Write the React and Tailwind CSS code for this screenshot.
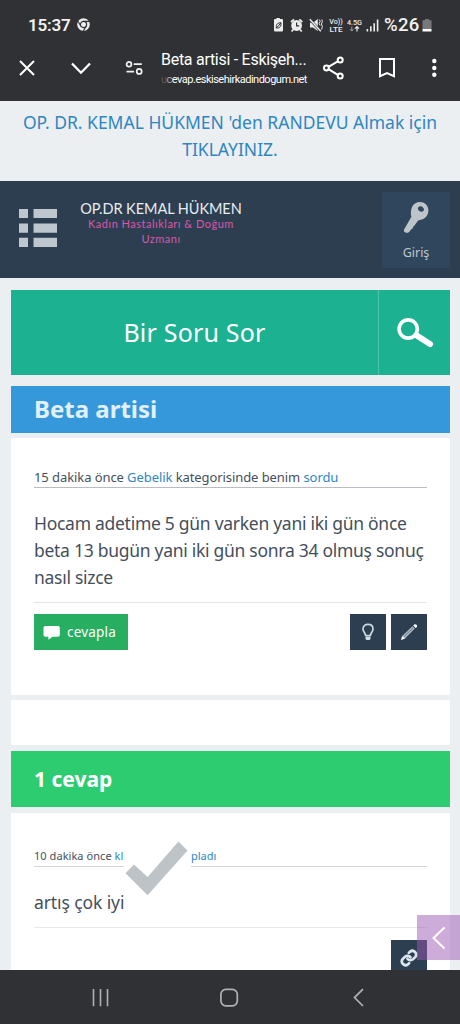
import React from "react";

function StatusBar() {
  return (
    <div className="flex h-[48px] items-center pl-[28px] pt-px text-[#f1f1f1]">
      <span className="w-[43px] whitespace-nowrap font-['Roboto',sans-serif] text-[17px] font-semibold leading-[20px] tracking-[-0.2px]">15:37</span>
      <svg className="ml-[6px]" width="13" height="13" viewBox="0 0 13 13">
        <circle cx="6.5" cy="6.5" r="6.3" fill="#ededed" />
        <circle cx="6.5" cy="6.5" r="3.1" fill="none" stroke="#303134" strokeWidth="1.2" />
        <path d="M6.5 3.4H12M3.8 8L1 3.3M9.2 8L6.4 12.8" stroke="#303134" strokeWidth="1.1" />
      </svg>
      <svg className="ml-[183px]" width="108" height="18" viewBox="273 15.5 108 18">
        <path d="M276.4 18.5V17.6H279.8V18.5H282Q283 18.5 283 19.5V30Q283 31 282 31H275Q274 31 274 30V19.5Q274 18.5 275 18.5Z" fill="#ededed" />
        <path d="M276.3 27.7L280.7 22.7M276.4 27.5C275.7 23.3 278 22.4 281 22.2C281.3 26 279.6 28 276.4 27.5Z" fill="none" stroke="#303134" strokeWidth="1" />
        <circle cx="296.6" cy="25" r="5.4" fill="#ededed" />
        <path d="M291 21.5L294 18.9M299.3 18.9L302.3 21.5M293.2 29L291.6 31M300 29L301.7 31" stroke="#ededed" strokeWidth="1.8" />
        <path d="M296.6 22V25.3H299.2" fill="none" stroke="#303134" strokeWidth="1.2" />
        <path d="M310 22.3H313L317.8 18.5V30.5L313 27H310Z" fill="#ededed" />
        <path d="M309.8 18.8L320.8 30.8" stroke="#303134" strokeWidth="2.6" />
        <path d="M309.8 18.8L320.8 30.8" stroke="#ededed" strokeWidth="1.4" />
        <path d="M319.2 19L320.3 20.8L319 22.8L320.2 25M321.8 19L322.4 21L321.4 23.5L322.4 26L321.6 29" fill="none" stroke="#ededed" strokeWidth="1" />
        <g fill="#ededed" fontFamily="Roboto, sans-serif" fontWeight="500">
          <text x="329.3" y="23.3" fontSize="7" textLength="13.5" lengthAdjust="spacingAndGlyphs">Vo))</text>
          <text x="329.5" y="31.7" fontSize="7.4" textLength="13" lengthAdjust="spacingAndGlyphs">LTE</text>
          <text x="347" y="24" fontSize="8" textLength="15" lengthAdjust="spacingAndGlyphs">4.5G</text>
        </g>
        <path d="M351.8 26V30.5M350 28.7L351.8 30.6L353.6 28.7" fill="none" stroke="#999" strokeWidth="1" />
        <path d="M357 31V26.4M355 28.2L357 26.2L359 28.2" fill="none" stroke="#ededed" strokeWidth="1.2" />
        <path d="M367.4 31V28.4M370.8 31V25.7M374.2 31V22.7M377.6 31V19" stroke="#ededed" strokeWidth="1.6" />
      </svg>
      <span className="ml-[3px] w-[38px] whitespace-nowrap font-['Roboto',sans-serif] text-[18.5px] font-medium leading-[20px] tracking-[0.3px]">%26</span>
      <svg className="mt-px" width="10" height="13" viewBox="0 0 10 13">
        <path d="M3 0H7V1.3H9.5V10H.5V1.3H3Z" fill="#77787a" />
        <path d="M.5 10H9.5V12.5H.5Z" fill="#fff" />
      </svg>
    </div>
  );
}

function BrowserBar() {
  return (
    <div className="flex h-[53px] pl-[19px] text-white">
      <svg className="mt-[12px] shrink-0" width="16" height="16" viewBox="0 0 16 16">
        <path d="M1 1L15 15M15 1L1 15" stroke="#fff" strokeWidth="2" />
      </svg>
      <svg className="ml-[35px] mt-[14px] shrink-0" width="22" height="13" viewBox="0 0 22 13">
        <path d="M2 1.5L11 10.7L20 1.5" fill="none" stroke="#fff" strokeWidth="2.3" />
      </svg>
      <svg className="ml-[33px] mt-[12px] shrink-0" width="18" height="16" viewBox="0 0 18 16">
        <g fill="none" stroke="#f0f0f0" strokeWidth="1.7">
          <circle cx="4" cy="4.2" r="2.4" />
          <circle cx="14.2" cy="11.4" r="2.5" />
          <path d="M8.7 4.2H16.8M1.5 11.6H9" />
        </g>
      </svg>
      <div className="ml-[18px] w-[148px] shrink-0 whitespace-nowrap font-['Roboto',sans-serif]">
        <div className="h-[24px] text-[16px] leading-[24px] tracking-[-0.28px]">Beta artisi - Eskişeh...</div>
        <div className="h-[14px] text-[11px] leading-[15px] tracking-[-0.5px]">
          <span className="text-[#5a5b5e]">u</span><span className="text-[#a5a5a7]">c</span>evap.eskisehirkadindogum.net
        </div>
      </div>
      <svg className="ml-[14px] mt-[8px] shrink-0" width="22" height="24" viewBox="0 0 22 24">
        <g fill="none" stroke="#fff" strokeWidth="2">
          <path d="M5.5 10.8L14.8 5.3M5.5 13.2L14.8 18.9" />
          <circle cx="3.4" cy="12" r="2.4" />
          <circle cx="17.2" cy="4.1" r="2.5" />
          <circle cx="17.2" cy="20" r="2.5" />
        </g>
      </svg>
      <svg className="ml-[33px] mt-[9px] shrink-0" width="18" height="22" viewBox="0 0 18 22">
        <path d="M2 2H16V19.2L9 16L2 19.2Z" fill="none" stroke="#fff" strokeWidth="2" />
      </svg>
      <svg className="ml-[34px] mt-[10px] shrink-0" width="8" height="20" viewBox="0 0 8 20">
        <circle cx="4.3" cy="3" r="2.2" fill="#fff" />
        <circle cx="4.3" cy="10" r="2.2" fill="#fff" />
        <circle cx="4.3" cy="16.8" r="2.2" fill="#fff" />
      </svg>
    </div>
  );
}

function SiteHeader() {
  return (
    <header className="flex h-[97px] bg-[#2d3e50] pl-[18px]">
      <svg className="mt-[27px] shrink-0" width="40" height="40" viewBox="0 0 40 40">
        <path d="M1 1H10V10H1ZM15.5 1H39V10H15.5ZM1 15.4H10V24.8H1ZM15.5 15.4H39V24.8H15.5ZM1 29.8H10V39H1ZM15.5 29.8H39V39H15.5Z" fill="#bdc7cd" />
      </svg>
      <div className="ml-[21px] mt-[19px] w-[164px] shrink-0 whitespace-nowrap text-center font-['Lato',sans-serif]">
        <div className="text-[14.5px] leading-[18px] tracking-[-0.05px] text-[#e6edf1]">OP.DR KEMAL HÜKMEN</div>
        <div className="mt-[-1px] text-[11px] leading-[14.5px] tracking-[0.5px] text-[#d858ac]">
          Kadın Hastalıkları &amp; Doğum
          <br />
          Uzmanı
        </div>
      </div>
      <div className="ml-auto mr-[10px] mt-[11px] flex h-[76px] w-[68px] flex-col items-center bg-[#30465c]">
        <svg className="mt-[9px]" width="28" height="33" viewBox="0 0 28 33">
          <path d="M17.7 1C22.5 1 26.4 4.5 26.4 9.2C26.4 14.5 22.8 18.4 18 18.9L16.2 19.6L12.3 24.8L11.3 25.6L10.9 27.3L9 28.4L7 31.2Q2 33 1.8 29L9.4 15.8L8.9 13.8C8.4 6 12 1 17.7 1ZM17.4 5.4C15.4 5.9 15.5 8.2 17 9.7C18.8 11.3 21.4 11 21.9 9.1C22.4 6.6 19.4 4.6 17.4 5.4Z" fill="#bdc5c9" fillRule="evenodd" />
        </svg>
        <span className="mt-[10px] text-[12.5px] leading-[18px] text-[#bcc8d0]">Giriş</span>
      </div>
    </header>
  );
}

function AskBar() {
  return (
    <div className="flex h-[85px] bg-[#1bb191] text-white">
      <div className="flex w-[367px] items-center justify-center text-[25px] tracking-[0.2px]">Bir Soru Sor</div>
      <div className="flex w-[72px] items-center justify-center border-l border-[#4fc5ad]">
        <svg width="38" height="32" viewBox="0 0 38 32">
          <circle cx="12.2" cy="12" r="9.1" fill="none" stroke="#fff" strokeWidth="3.6" />
          <path d="M20.3 18.2L34 27.1" stroke="#fff" strokeWidth="6" strokeLinecap="round" />
        </svg>
      </div>
    </div>
  );
}

function QuestionCard() {
  return (
    <article className="mt-[5px] h-[257px] rounded-[2px] bg-white px-[23px] pt-[28px]">
      <div className="h-[22px] whitespace-nowrap border-b border-[#b9bdc2] text-[13px] leading-[22px] tracking-[-0.08px]">
        15 dakika önce <span className="text-[#2e86c5]">Gebelik</span> kategorisinde benim <span className="text-[#2e86c5]">sordu</span>
      </div>
      <p className="mt-[22px] whitespace-nowrap text-[17.5px] leading-[27px] tracking-[-0.28px]">
        Hocam adetime 5 gün varken yani iki gün önce
        <br />
        beta 13 bugün yani iki gün sonra 34 olmuş sonuç
        <br />
        nasıl sizce
      </p>
      <div className="mt-[11px] border-b border-[#e3e5e8]" />
      <div className="mt-[11px] flex h-[36px] gap-[5px]">
        <button className="mr-auto flex w-[94px] items-center bg-[#27ae60] pl-[9px] text-white">
          <svg width="17" height="15" viewBox="0 0 17 15">
            <path d="M2.3 1H15Q16.8 1 16.8 2.7V10Q16.8 11.8 15 11.8H9.5L5.4 14.7V11.8H2.3Q.5 11.8 .5 10V2.7Q.5 1 2.3 1Z" fill="#fff" />
          </svg>
          <span className="ml-[7px] text-[13.5px] leading-[18px] tracking-[0.2px]">cevapla</span>
        </button>
        <button className="flex w-[36px] items-center justify-center bg-[#2c3e50]">
          <svg width="14" height="18" viewBox="0 0 14 18">
            <path d="M4.6 12.5C4.6 9.8 2 9 2 5.9C2 3 4.1 1.3 7 1.3S12 3 12 5.9C12 9 9.4 9.8 9.4 12.5Z" fill="none" stroke="#c9d7e2" strokeWidth="1.7" />
            <path d="M4.5 13.5H9.5V16L8.5 17H5.5L4.5 16Z" fill="#d5dfe6" />
          </svg>
        </button>
        <button className="flex w-[36px] items-center justify-center bg-[#2c3e50]">
          <svg width="18" height="18" viewBox="0 0 18 18">
            <path d="M1.3 16.7L2.7 12.6L12.4 3.3L14.8 5.6L5.3 15.2Z" fill="#a8b6c1" />
            <path d="M4 13.8L12.8 5" stroke="#52677a" strokeWidth=".7" />
            <path d="M13.2 2.5L14.6 1.2Q17.6 1 17 4L15.6 5Z" fill="#fff" />
            <path d="M1 17L2.2 13L5 15.6Z" fill="#fff" />
          </svg>
        </button>
      </div>
    </article>
  );
}

function AnswerCard() {
  return (
    <article className="relative mt-[6px] h-[157px] bg-white px-[23px] pt-[32px]">
      <div className="flex h-[22px] whitespace-nowrap border-b border-[#d2d4d6] text-[11px] leading-[22px]">
        <span className="w-[157px] tracking-[0.05px]">
          10 dakika önce <span className="text-[#2e86c5]">kl</span>
        </span>
        <span className="text-[#2e86c5]">pladı</span>
      </div>
      <svg className="absolute left-[113px] top-[25px]" width="67" height="62" viewBox="124 838 67 62">
        <path d="M124 838H191V900H124Z" fill="#fff" />
        <path d="M125.5 873.3L134 864.5L147.6 877L178.5 841.5L187.5 850.5L147.6 895.2Z" fill="#bdc3c7" />
      </svg>
      <p className="relative mt-[22px] whitespace-nowrap text-[17.5px] leading-[27px] tracking-[-0.1px]">artış çok iyi</p>
      <div className="mt-[11px] border-b border-[#e6e8ea]" />
      <div className="mt-[12px] flex justify-end">
        <button className="flex h-[30px] w-[36px] justify-center bg-[#2c3e50] pt-[9px]">
          <svg width="18" height="18" viewBox="0 0 24 24" fill="none" stroke="#dce6f0" strokeWidth="3.6" strokeLinecap="round">
            <path d="M10 13a5 5 0 0 0 7.5 .5l3-3a5 5 0 0 0-7-7l-1.7 1.7" />
            <path d="M14 11a5 5 0 0 0-7.5-.5l-3 3a5 5 0 0 0 7 7l1.7-1.7" />
          </svg>
        </button>
      </div>
    </article>
  );
}

function NavBar() {
  return (
    <nav className="flex h-[54px] bg-[#303134]">
      <svg className="ml-[90px] mt-[18px]" width="20" height="20" viewBox="0 0 20 20">
        <path d="M3.5 1V18.3M10.5 1V18.3M17.5 1V18.3" stroke="#b0b1b3" strokeWidth="1.6" />
      </svg>
      <svg className="ml-[109px] mt-[18px]" width="20" height="20" viewBox="0 0 20 20">
        <rect x="1.9" y="1.4" width="16.4" height="16.4" rx="5" fill="none" stroke="#b0b1b3" strokeWidth="1.7" />
      </svg>
      <svg className="ml-[113px] mt-[18px]" width="14" height="20" viewBox="0 0 14 20">
        <path d="M11 1.2L2.5 9.6L11 18" fill="none" stroke="#b0b1b3" strokeWidth="1.7" />
      </svg>
    </nav>
  );
}

export default function App() {
  return (
    <div className="relative h-[1024px] w-[460px] overflow-hidden bg-[#eceff1] font-['Noto_Sans',sans-serif] text-[#454f5b]">
      <div className="h-[101px] bg-[#303134]">
        <StatusBar />
        <BrowserBar />
      </div>
      <div className="h-[80px] whitespace-nowrap pt-[8px] text-center text-[17.5px] leading-[27px] text-[#2f86c0]">
        OP. DR. KEMAL HÜKMEN 'den RANDEVU Almak için
        <br />
        TIKLAYINIZ.
      </div>
      <SiteHeader />
      <main className="ml-[11px] w-[439px] pt-[12px]">
        <AskBar />
        <h1 className="mt-[11px] h-[47px] bg-[#3498db] pl-[23px] text-[24px] font-bold leading-[46px] text-[#e2f0fc]">Beta artisi</h1>
        <QuestionCard />
        <div className="mt-[5px] h-[45px] rounded-[2px] bg-white" />
        <h2 className="mt-[6px] h-[56px] bg-[#2ecc71] pl-[23px] text-[21px] font-bold leading-[56px] text-white">1 cevap</h2>
        <AnswerCard />
      </main>
      <NavBar />
      <button className="absolute left-[417px] top-[915px] flex h-[45px] w-[43px] items-center bg-[#9b59b6]/50 pl-[14px]">
        <svg width="16" height="24" viewBox="0 0 16 24">
          <path d="M13.5 1.5L2.5 12L13.5 22.5" fill="none" stroke="#fff" strokeWidth="2" />
        </svg>
      </button>
    </div>
  );
}
